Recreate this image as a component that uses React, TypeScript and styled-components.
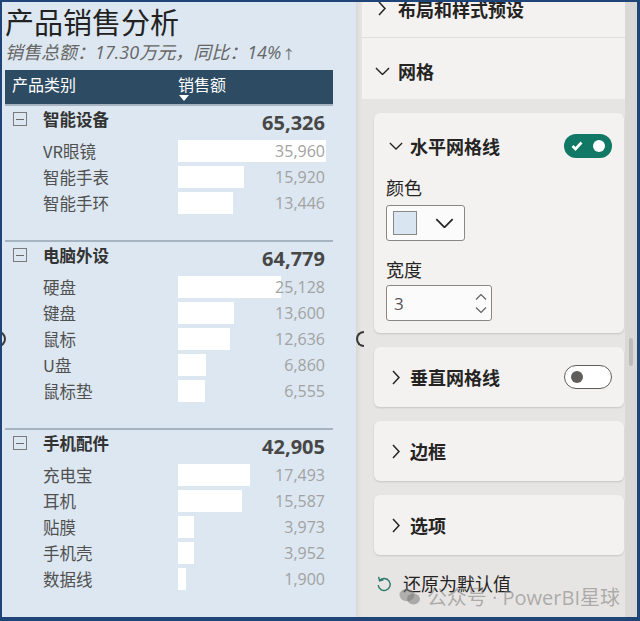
import React from 'react';
import styled, { createGlobalStyle } from 'styled-components';

const GlobalStyle = createGlobalStyle`
  html, body {
    margin: 0;
    padding: 0;
    background: #ffffff;
  }
  body {
    font-family: 'Noto Sans CJK SC', sans-serif;
  }
`;

const NUM_FONT = `'Open Sans', 'Noto Sans CJK SC', sans-serif`;
const CJK_FONT = `'Noto Sans CJK SC', 'Open Sans', sans-serif`;
const BAR_SCALE = 148 / 35960;

type Item = [string, number];
type Group = { name: string; total: number; items: Item[] };

const groups: Group[] = [
  {
    name: '智能设备',
    total: 65326,
    items: [
      ['VR眼镜', 35960],
      ['智能手表', 15920],
      ['智能手环', 13446],
    ],
  },
  {
    name: '电脑外设',
    total: 64779,
    items: [
      ['硬盘', 25128],
      ['键盘', 13600],
      ['鼠标', 12636],
      ['U盘', 6860],
      ['鼠标垫', 6555],
    ],
  },
  {
    name: '手机配件',
    total: 42905,
    items: [
      ['充电宝', 17493],
      ['耳机', 15587],
      ['贴膜', 3973],
      ['手机壳', 3952],
      ['数据线', 1900],
    ],
  },
];

const fmt = (n: number) => n.toLocaleString('en-US');

/* ---------- frame ---------- */

const Frame = styled.div`
  position: relative;
  width: 640px;
  height: 621px;
  box-sizing: border-box;
  border: 2px solid #1f4578;
  border-right-width: 3px;
  border-bottom-width: 4px;
  display: flex;
  overflow: hidden;
`;

/* ---------- report visual ---------- */

const Visual = styled.div`
  position: relative;
  width: 354px;
  flex-shrink: 0;
  background: #dce7f1;
  padding-left: 3px;
  box-sizing: border-box;
  display: flex;
  flex-direction: column;
`;

const Title = styled.div`
  font-family: ${CJK_FONT};
  font-size: 29px;
  line-height: 38px;
  height: 38px;
  color: #222222;
`;

const Subtitle = styled.div`
  font-family: ${NUM_FONT};
  font-style: italic;
  font-size: 18px;
  line-height: 24px;
  height: 24px;
  color: #666666;
  margin-bottom: 6px;
  overflow: visible;
`;

const UpArrow = styled.span`
  font-style: normal;
  font-size: 13px;
  line-height: 1;
  margin-left: 1px;
`;

const Table = styled.div`
  width: 328px;
  display: flex;
  flex-direction: column;
`;

const HeadRow = styled.div`
  height: 34px;
  background: #2d4b63;
  display: grid;
  grid-template-columns: 173px 1fr;
  color: #ffffff;
  font-family: ${CJK_FONT};
  font-size: 16px;
  line-height: 20px;
  box-sizing: border-box;
  padding-top: 4px;
`;

const HeadCell = styled.div<{ $pad?: number }>`
  padding-left: ${({ $pad }) => $pad ?? 0}px;
  display: flex;
  flex-direction: column;
  align-items: flex-start;
`;

const SortArrow = styled.span`
  margin: 1px 0 0 1px;
  width: 0;
  height: 0;
  border-left: 5px solid transparent;
  border-right: 5px solid transparent;
  border-top: 6px solid #ffffff;
`;

const GroupBlock = styled.div`
  border-top: 2px solid #a6b3c1;
  padding-bottom: 24px;
`;

const GroupHead = styled.div`
  height: 32px;
  padding-bottom: 6px;
  box-sizing: border-box;
  display: flex;
  align-items: center;
  padding-left: 8px;
  padding-right: 8px;
`;

const Collapse = styled.span`
  width: 14px;
  height: 14px;
  box-sizing: border-box;
  border: 1px solid #7a7a7a;
  display: flex;
  align-items: center;
  justify-content: center;
  margin-right: 16px;
  flex-shrink: 0;

  &::after {
    content: '';
    width: 8px;
    height: 1px;
    background: #6a6a6a;
  }
`;

const GroupName = styled.span`
  font-family: ${CJK_FONT};
  font-weight: 700;
  font-size: 16.5px;
  color: #333333;
  flex: 1;
`;

const GroupTotal = styled.span`
  font-family: ${NUM_FONT};
  font-weight: 700;
  font-size: 20px;
  color: #474747;
  margin-top: 6px;
`;

const ItemRow = styled.div`
  height: 26px;
  display: grid;
  grid-template-columns: 173px 149px;
  align-items: center;
`;

const ItemLabel = styled.span`
  padding-left: 38px;
  font-family: ${CJK_FONT};
  font-size: 16.5px;
  color: #505050;
`;

const ItemValue = styled.span`
  height: 22px;
  line-height: 22px;
  text-align: right;
  padding-right: 2px;
  font-family: ${NUM_FONT};
  font-size: 16px;
  color: #a2a2a2;
  background-image: linear-gradient(#ffffff, #ffffff);
  background-repeat: no-repeat;
  background-position: left center;
`;

const Handle = styled.span<{ $side: 'left' | 'right' }>`
  position: absolute;
  top: 329px;
  width: 6px;
  height: 12px;
  border: 2px solid #3a3a3a;
  ${({ $side }) =>
    $side === 'left'
      ? 'left: -4px; border-left: none; border-radius: 0 8px 8px 0;'
      : 'right: -8px; border-right: none; border-radius: 8px 0 0 8px; z-index: 2;'}
`;

/* ---------- format pane ---------- */

const Pane = styled.div`
  flex: 1;
  display: flex;
  background: #e7e5e3;
  box-shadow: inset 6px 0 5px -4px rgba(0, 0, 0, 0.07);
`;

const PaneBody = styled.div`
  flex: 1;
  display: flex;
  flex-direction: column;
  overflow: hidden;
`;

const ScrollTrack = styled.div`
  width: 12px;
  background: #dad8d6;
  display: flex;
  justify-content: center;
`;

const ScrollThumb = styled.div`
  margin-top: 336px;
  width: 4px;
  height: 28px;
  border-radius: 2px;
  background: #bdbbb9;
`;

const SectionList = styled.div`
  margin: -22px 0 0 6px;
  background: #f3f2f1;
  display: flex;
  flex-direction: column;
`;

const SectionRow = styled.div<{ $h: number; $padTop?: number; $line?: boolean }>`
  height: ${({ $h }) => $h}px;
  box-sizing: border-box;
  padding: ${({ $padTop }) => $padTop ?? 0}px 0 0 10px;
  display: flex;
  align-items: center;
  gap: 6px;
  ${({ $line }) => $line && 'border-bottom: 1px solid #e0dedc;'}
`;

const ChevronBox = styled.span`
  width: 20px;
  height: 20px;
  display: flex;
  align-items: center;
  justify-content: center;
  flex-shrink: 0;
`;

const HeadText = styled.span`
  font-family: ${CJK_FONT};
  font-weight: 700;
  font-size: 18px;
  color: #252423;
  flex: 1;
`;

const Card = styled.div<{ $padTop?: number; $padBottom?: number }>`
  margin: 14px 1px 0 18px;
  background: #f3f2f1;
  border-radius: 6px;
  box-shadow: 0 1px 2px rgba(0, 0, 0, 0.14);
  padding: ${({ $padTop }) => $padTop ?? 18}px 12px ${({ $padBottom }) => $padBottom ?? 18}px 12px;
  display: flex;
  flex-direction: column;

  &:first-of-type {
    margin-top: 12px;
  }
`;

const CardHead = styled.div`
  height: 24px;
  display: flex;
  align-items: center;
  gap: 4px;
`;

const FieldLabel = styled.div<{ $top: number }>`
  margin-top: ${({ $top }) => $top}px;
  font-family: ${CJK_FONT};
  font-size: 18px;
  line-height: 24px;
  color: #252423;
`;

const ColorPicker = styled.div`
  margin-top: 6px;
  width: 79px;
  height: 36px;
  box-sizing: border-box;
  border: 1px solid #8a8886;
  border-radius: 3px;
  background: #fbfbfb;
  display: flex;
  align-items: center;
  padding-left: 6px;
  gap: 18px;
`;

const Swatch = styled.span`
  width: 24px;
  height: 24px;
  box-sizing: border-box;
  border: 1.5px solid #8a8886;
  background: #d9e5f1;
`;

const NumberInput = styled.div`
  margin-top: 4px;
  width: 106px;
  height: 36px;
  box-sizing: border-box;
  border: 1px solid #8a8886;
  border-radius: 3px;
  background: #fbfbfb;
  display: flex;
  align-items: center;
  padding: 0 4px 0 7px;
  font-family: ${NUM_FONT};
  font-size: 17px;
  color: #555555;
`;

const InputValue = styled.span`
  flex: 1;
`;

const Spinner = styled.span`
  display: flex;
  flex-direction: column;
  gap: 7px;
`;

const Toggle = styled.span<{ $on?: boolean }>`
  width: 48px;
  height: 24px;
  box-sizing: border-box;
  border-radius: 12px;
  display: flex;
  align-items: center;
  padding: 0 7px;
  background: ${({ $on }) => ($on ? '#117865' : '#ffffff')};
  border: ${({ $on }) => ($on ? 'none' : '1.5px solid #605e5c')};
  justify-content: space-between;
`;

const Knob = styled.span<{ $on?: boolean }>`
  width: 12px;
  height: 12px;
  border-radius: 50%;
  background: ${({ $on }) => ($on ? '#ffffff' : '#605e5c')};
  ${({ $on }) => !$on && 'margin-left: -1px;'}
`;

const ResetRow = styled.div`
  margin: 16px 0 0 20px;
  height: 24px;
  display: flex;
  align-items: center;
  gap: 11px;
  font-family: ${CJK_FONT};
  font-size: 18px;
  color: #252423;
`;

const Watermark = styled.div`
  position: absolute;
  right: 17px;
  bottom: 6px;
  display: flex;
  align-items: center;
  gap: 6px;
  font-family: ${NUM_FONT};
  font-size: 20px;
  color: rgba(120, 120, 120, 0.55);
  pointer-events: none;
`;

/* ---------- icons ---------- */

const ChevronDown: React.FC<{ w?: number }> = ({ w = 15 }) => (
  <svg width={w} height={w / 2 + 1} viewBox="0 0 16 9">
    <polyline points="1,1 8,8 15,1" fill="none" stroke="#252423" strokeWidth="1.5" />
  </svg>
);

const ChevronRight = () => (
  <svg width="8" height="15" viewBox="0 0 8 15">
    <polyline points="1,1 7,7.5 1,14" fill="none" stroke="#252423" strokeWidth="1.5" />
  </svg>
);

const SpinArrow: React.FC<{ up?: boolean }> = ({ up }) => (
  <svg width="12" height="6" viewBox="0 0 12 6">
    <polyline
      points={up ? '1,5.5 6,0.5 11,5.5' : '1,0.5 6,5.5 11,0.5'}
      fill="none"
      stroke="#605e5c"
      strokeWidth="1.1"
    />
  </svg>
);

const Check = () => (
  <svg width="12" height="10" viewBox="0 0 12 10">
    <polyline points="1.5,5 4.5,8 10.5,1.5" fill="none" stroke="#ffffff" strokeWidth="2.6" />
  </svg>
);

const ResetIcon = () => (
  <svg width="16" height="17" viewBox="0 0 16 17">
    <path
      d="M3.6 5.6 A6 6 0 1 1 2.2 10"
      fill="none"
      stroke="#2b7a6c"
      strokeWidth="1.4"
    />
    <polyline points="2.6,1.8 3.6,5.8 7.4,4.8" fill="none" stroke="#2b7a6c" strokeWidth="1.4" />
  </svg>
);

const WeChat = () => (
  <svg width="22" height="18" viewBox="0 0 22 18">
    <ellipse cx="8" cy="7" rx="7.5" ry="6.2" fill="rgba(120,120,120,0.5)" />
    <ellipse cx="14.5" cy="11" rx="6.5" ry="5.4" fill="rgba(120,120,120,0.55)" />
  </svg>
);

/* ---------- app ---------- */

export default function App() {
  return (
    <>
      <GlobalStyle />
      <Frame>
        <Visual>
          <Title>产品销售分析</Title>
          <Subtitle>
            销售总额：17.30万元，同比：14%<UpArrow>↑</UpArrow>
          </Subtitle>
          <Table>
            <HeadRow>
              <HeadCell $pad={7}>产品类别</HeadCell>
              <HeadCell>
                销售额
                <SortArrow />
              </HeadCell>
            </HeadRow>
            {groups.map((g) => (
              <GroupBlock key={g.name}>
                <GroupHead>
                  <Collapse />
                  <GroupName>{g.name}</GroupName>
                  <GroupTotal>{fmt(g.total)}</GroupTotal>
                </GroupHead>
                {g.items.map(([label, value]) => (
                  <ItemRow key={label}>
                    <ItemLabel>{label}</ItemLabel>
                    <ItemValue
                      style={{ backgroundSize: `${Math.round(value * BAR_SCALE)}px 22px` }}
                    >
                      {fmt(value)}
                    </ItemValue>
                  </ItemRow>
                ))}
              </GroupBlock>
            ))}
          </Table>
          <Handle $side="left" />
          <Handle $side="right" />
        </Visual>

        <Pane>
          <PaneBody>
            <SectionList>
              <SectionRow $h={58} $line>
                <ChevronBox>
                  <ChevronRight />
                </ChevronBox>
                <HeadText>布局和样式预设</HeadText>
              </SectionRow>
              <SectionRow $h={61} $padTop={5}>
                <ChevronBox>
                  <ChevronDown />
                </ChevronBox>
                <HeadText>网格</HeadText>
              </SectionRow>
            </SectionList>

            <Card $padTop={21} $padBottom={12}>
              <CardHead>
                <ChevronBox>
                  <ChevronDown w={14} />
                </ChevronBox>
                <HeadText>水平网格线</HeadText>
                <Toggle $on>
                  <Check />
                  <Knob $on />
                </Toggle>
              </CardHead>
              <FieldLabel $top={17}>颜色</FieldLabel>
              <ColorPicker>
                <Swatch />
                <ChevronDown w={19} />
              </ColorPicker>
              <FieldLabel $top={16}>宽度</FieldLabel>
              <NumberInput>
                <InputValue>3</InputValue>
                <Spinner>
                  <SpinArrow up />
                  <SpinArrow />
                </Spinner>
              </NumberInput>
            </Card>

            <Card>
              <CardHead>
                <ChevronBox>
                  <ChevronRight />
                </ChevronBox>
                <HeadText>垂直网格线</HeadText>
                <Toggle>
                  <Knob />
                </Toggle>
              </CardHead>
            </Card>

            <Card>
              <CardHead>
                <ChevronBox>
                  <ChevronRight />
                </ChevronBox>
                <HeadText>边框</HeadText>
              </CardHead>
            </Card>

            <Card>
              <CardHead>
                <ChevronBox>
                  <ChevronRight />
                </ChevronBox>
                <HeadText>选项</HeadText>
              </CardHead>
            </Card>

            <ResetRow>
              <ResetIcon />
              还原为默认值
            </ResetRow>
          </PaneBody>
          <ScrollTrack>
            <ScrollThumb />
          </ScrollTrack>
        </Pane>

        <Watermark>
          <WeChat />
          <span>公众号 · PowerBI星球</span>
        </Watermark>
      </Frame>
    </>
  );
}
